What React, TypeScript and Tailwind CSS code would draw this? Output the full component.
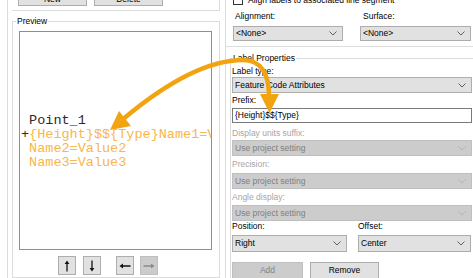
import clsx from "clsx";

const SANS = "font-['Liberation_Sans',Arial,sans-serif] text-[8.5px]";

function Chevron({ disabled }: { disabled?: boolean }) {
  return (
    <svg width="8" height="5" viewBox="0 0 8 5" className="shrink-0">
      <polyline
        points="0.5,0.5 4,4 7.5,0.5"
        fill="none"
        stroke={disabled ? "#b4b4b4" : "#606060"}
        strokeWidth="1"
      />
    </svg>
  );
}

function Combo({
  value,
  disabled,
  className,
}: {
  value: string;
  disabled?: boolean;
  className?: string;
}) {
  return (
    <div
      className={clsx(
        "flex items-center justify-between border pl-[2px] pr-[5px] leading-none",
        disabled
          ? "bg-[#cccccc] border-[#bfbfbf] text-[#7f7f7f]"
          : "bg-[#e1e1e1] border-[#adadad] text-black",
        className,
      )}
    >
      <span className="whitespace-nowrap">{value}</span>
      <Chevron disabled={disabled} />
    </div>
  );
}

function Label({ text, disabled, className }: { text: string; disabled?: boolean; className?: string }) {
  return (
    <div
      className={clsx(
        "flex items-center whitespace-nowrap leading-none",
        disabled ? "text-[#a6a6a6]" : "text-black",
        className,
      )}
    >
      {text}
    </div>
  );
}

function Btn({ text, disabled, className }: { text: string; disabled?: boolean; className?: string }) {
  return (
    <div
      className={clsx(
        "flex items-center justify-center border leading-none",
        disabled
          ? "bg-[#cccccc] border-[#bfbfbf] text-[#838383]"
          : "bg-[#e1e1e1] border-[#adadad] text-black",
        className,
      )}
    >
      {text}
    </div>
  );
}

function ArrowGlyph({ dir, disabled }: { dir: "up" | "down" | "left" | "right"; disabled?: boolean }) {
  const rot = { up: 0, right: 90, down: 180, left: 270 }[dir];
  const c = disabled ? "#8a8a8a" : "#111111";
  return (
    <svg width="12" height="12" viewBox="0 0 12 12" style={{ transform: `rotate(${rot}deg)` }}>
      <line x1="6" y1="3" x2="6" y2="11.5" stroke={c} strokeWidth="1.3" />
      <polygon points="6,0.5 3.6,4 8.4,4" fill={c} />
    </svg>
  );
}

function MoveBtn({ dir, disabled }: { dir: "up" | "down" | "left" | "right"; disabled?: boolean }) {
  return (
    <div
      className={clsx(
        "flex h-[19px] w-[18px] items-center justify-center border",
        disabled ? "bg-[#cccccc] border-[#bfbfbf]" : "bg-[#e1e1e1] border-[#adadad]",
      )}
    >
      <ArrowGlyph dir={dir} disabled={disabled} />
    </div>
  );
}

function PreviewPane() {
  return (
    <div className="ml-[6px] mt-[5px] h-[219px] w-[193px] overflow-hidden border border-[#8f8f8f] bg-white">
      <div className="whitespace-pre pl-[1px] pt-[82px] font-['Liberation_Mono','Courier_New',monospace] text-[13.5px] leading-[13.7px]">
        <div className="text-[#2a2a2a]"> Point_1</div>
        <div>
          <span className="text-[#2a2a2a]">+</span>
          <span className="text-[#f8b64c]">{"{Height}$${Type}Name1=Value1"}</span>
        </div>
        <div className="text-[#f8b64c]"> Name2=Value2</div>
        <div className="text-[#f8b64c]"> Name3=Value3</div>
      </div>
    </div>
  );
}

function CurvedArrow() {
  return (
    <svg
      className="pointer-events-none absolute left-0 top-0"
      width="473"
      height="278"
      viewBox="0 0 473 278"
    >
      <path
        d="M 122 120 C 160 88, 205 60, 243 60 C 261 60, 269 74, 269 96"
        fill="none"
        stroke="#f2a310"
        strokeWidth="4.5"
      />
      <polygon points="110,130 119,111 131,126" fill="#f2a310" />
      <polygon points="269.5,113 260,94 279,94" fill="#f2a310" />
    </svg>
  );
}

export default function App() {
  return (
    <div className={clsx("relative flex h-[278px] w-[473px] overflow-hidden bg-white", SANS)}>
      {/* left column */}
      <div className="ml-[7px] flex w-[219px] shrink-0 flex-col border-x border-[#dcdcdc]">
        <div className="ml-[4px] flex h-[13px] w-[208px] items-start gap-[7px] border-b border-r border-[#dcdcdc] pl-[6px]">
          <Btn text="New" className="mt-[-8px] h-[14px] w-[69px]" />
          <Btn text="Delete" className="mt-[-8px] h-[14px] w-[69px]" />
        </div>
        <fieldset className="ml-[4px] mt-[5px] h-[300px] w-[208px] border border-[#dcdcdc]">
          <legend className="ml-[3px] px-[1px] leading-[10px]">Preview</legend>
          <PreviewPane />
          <div className="ml-[45px] mt-[6px] flex">
            <MoveBtn dir="up" />
            <div className="ml-[7px]">
              <MoveBtn dir="down" />
            </div>
            <div className="ml-[15px]">
              <MoveBtn dir="left" />
            </div>
            <div className="ml-[6px]">
              <MoveBtn dir="right" disabled />
            </div>
          </div>
        </fieldset>
      </div>

      {/* right column */}
      <div className="flex min-w-0 flex-1 flex-col">
        <div className="border-b border-[#dcdcdc] pb-[5px] pl-[7px] pr-[1px]">
          <div className="mt-[-6px] flex h-[12px] items-center gap-[5px]">
            <div className="h-[10px] w-[10px] border border-[#333333] bg-white" />
            <span className="whitespace-nowrap">Align labels to associated line segment</span>
          </div>
          <div className="mt-[5px] grid grid-cols-[110px_111px] gap-x-[17px]">
            <Label text="Alignment:" className="h-[10px] pl-[2px]" />
            <Label text="Surface:" className="h-[10px] pl-[3px]" />
            <Combo value="<None>" className="mt-[5px] h-[15px]" />
            <Combo value="<None>" className="mt-[5px] h-[15px]" />
          </div>
        </div>

        <fieldset className="ml-[4px] mt-[6px] h-[300px] border border-r-0 border-[#dcdcdc] pl-[1px] pr-[1px]">
          <legend className="px-[1px] leading-[10px]">Label Properties</legend>
          <Label text="Label type:" className="mt-[2px] h-[12px]" />
          <Combo value="Feature Code Attributes" className="h-[16px]" />
          <Label text="Prefix:" className="mt-[1px] h-[12px]" />
          <div className="mt-[2px] flex h-[15px] items-center border border-[#7a7a7a] bg-white pl-[2px] leading-none">
            {"{Height}$${Type}"}
          </div>
          <Label text="Display units suffix:" disabled className="mt-[4px] h-[12px]" />
          <Combo value="Use project setting" disabled className="mt-[1px] h-[16px]" />
          <Label text="Precision:" disabled className="mt-[2px] h-[12px]" />
          <Combo value="Use project setting" disabled className="mt-[3px] h-[16px]" />
          <Label text="Angle display:" disabled className="mt-[2px] h-[12px]" />
          <Combo value="Use project setting" disabled className="mt-[2px] h-[16px]" />
          <div className="grid grid-cols-[115px_113px] gap-x-[11px]">
            <Label text="Position:" className="h-[10px]" />
            <Label text="Offset:" className="h-[10px]" />
            <Combo value="Right" className="mt-[4px] h-[17px]" />
            <Combo value="Center" className="mt-[4px] h-[17px]" />
          </div>
          <div className="mt-[10px] flex gap-[7px]">
            <Btn text="Add" disabled className="h-[17px] w-[71px]" />
            <Btn text="Remove" className="h-[17px] w-[69px]" />
          </div>
        </fieldset>
      </div>

      <CurvedArrow />
    </div>
  );
}
